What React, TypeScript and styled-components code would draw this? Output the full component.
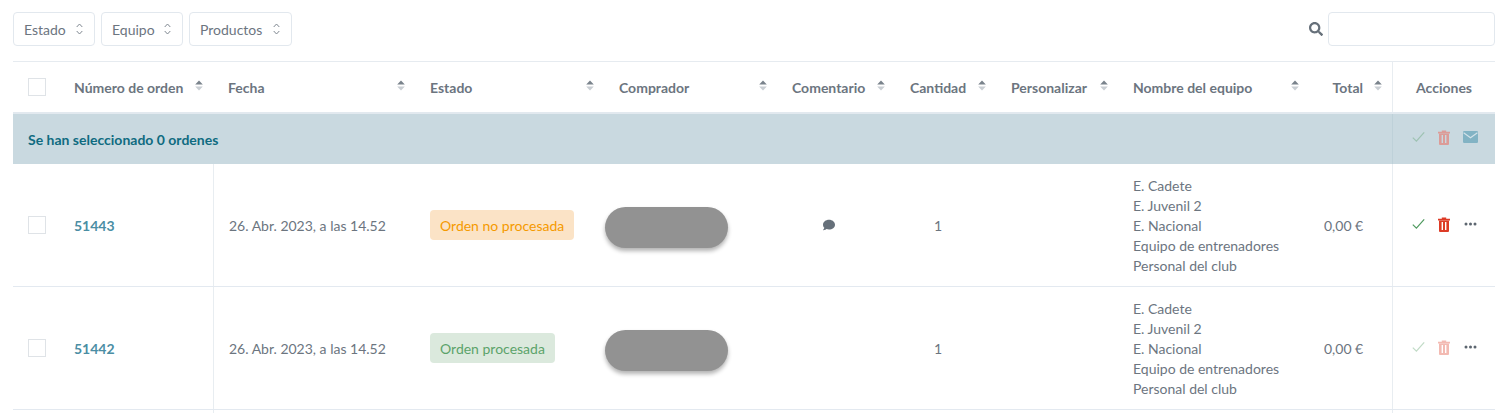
import React from "react";
import styled, { createGlobalStyle } from "styled-components";
import { FaComment, FaSearch } from "react-icons/fa";

const GRID = "46px 154px 202px 189px 173px 118px 101px 122px 191px 83px 103px";

const GlobalStyle = createGlobalStyle`
  html, body {
    margin: 0;
    padding: 0;
    background: #fff;
    overflow: hidden;
    font-family: "Lato", "Liberation Sans", sans-serif;
    color: #6c757f;
  }
`;

const Page = styled.div`
  padding: 12px 14px 0 13px;
  height: 401px;
  overflow: hidden;
`;

const Toolbar = styled.div`
  display: flex;
  justify-content: space-between;
  align-items: center;
  height: 34px;
  margin-bottom: 15px;
`;

const Filters = styled.div`
  display: flex;
  gap: 6px;
`;

const FilterButton = styled.button<{ $width: number }>`
  display: flex;
  align-items: center;
  justify-content: space-between;
  box-sizing: border-box;
  width: ${(p) => p.$width}px;
  height: 34px;
  padding: 0 11px 0 10px;
  background: #fff;
  border: 1px solid #e2e8ee;
  border-radius: 4px;
  font: 400 14px "Lato", sans-serif;
  color: #6c757f;
`;

const SearchBox = styled.div`
  display: flex;
  align-items: center;
  gap: 5px;
  color: #66707a;
`;

const SearchInput = styled.input`
  box-sizing: border-box;
  width: 167px;
  height: 34px;
  background: #fff;
  border: 1px solid #e2e8ee;
  border-radius: 4px;
`;

const HeaderRow = styled.div`
  display: grid;
  grid-template-columns: ${GRID};
  height: 50px;
  border-top: 1px solid #e6ebf0;
  border-bottom: 2px solid #e2e9ef;
`;

const HeaderCell = styled.div<{ $end?: boolean }>`
  display: flex;
  align-items: center;
  justify-content: ${(p) => (p.$end ? "flex-end" : "space-between")};
  gap: 11px;
  padding: 0 10px 0 15px;
  font-size: 14px;
  font-weight: 700;
  color: #6c757f;
  white-space: nowrap;
`;

const ActionsHead = styled(HeaderCell)`
  justify-content: center;
  padding: 0;
  border-left: 1px solid #e8edf1;
`;

const Banner = styled.div`
  display: grid;
  grid-template-columns: 1fr 103px;
  align-items: stretch;
  height: 50px;
  background: #c9d9e0;
`;

const BannerText = styled.div`
  display: flex;
  align-items: center;
  padding-left: 15px;
  font-size: 14px;
  font-weight: 700;
  color: #0f6b80;
`;

const ActionGroup = styled.div`
  display: flex;
  align-items: center;
  box-sizing: border-box;
  height: 100%;
  padding: 0 0 2px 12px;
  border-left: 1px solid #e8edf1;
`;

const BannerActions = styled(ActionGroup)`
  padding-bottom: 4px;
  border-left-color: #bed1d9;
`;

const ActionSlot = styled.span<{ $faded?: boolean }>`
  display: flex;
  justify-content: center;
  align-items: center;
  width: 26px;
  opacity: ${(p) => (p.$faded ? 0.35 : 1)};
`;

const Row = styled.div`
  display: grid;
  grid-template-columns: ${GRID};
  height: 122px;
  border-bottom: 1px solid #e3e9f0;
`;

const TailRow = styled(Row)`
  height: 3px;
  border-bottom: none;
`;

const Cell = styled.div<{ $divided?: boolean; $center?: boolean }>`
  display: flex;
  align-items: center;
  justify-content: ${(p) => (p.$center ? "center" : "flex-start")};
  padding: ${(p) => (p.$center ? "0 30px 0 15px" : "0 0 0 15px")};
  font-size: 14px;
  color: #6c757f;
  white-space: nowrap;
  border-left: ${(p) => (p.$divided ? "1px solid #e8edf1" : "none")};
`;

const Check = styled.span`
  display: block;
  width: 18px;
  height: 18px;
  box-sizing: border-box;
  background: #fff;
  border: 1px solid #dfe3e7;
`;

const OrderLink = styled.a`
  font-weight: 700;
  color: #4b8ea4;
`;

const Badge = styled.span<{ $done?: boolean }>`
  display: inline-flex;
  align-items: center;
  height: 30px;
  padding: 0 10px;
  border-radius: 4px;
  background: ${(p) => (p.$done ? "#dbe9dd" : "#fbe3c6")};
  color: ${(p) => (p.$done ? "#5ba36a" : "#f59a00")};
`;

const BuyerPill = styled.span`
  display: block;
  width: 123px;
  height: 41px;
  margin: 4px 0 0 -14px;
  border-radius: 21px;
  background: #929292;
  box-shadow: 0 3px 4px rgba(0, 0, 0, 0.3);
`;

const TeamList = styled.div`
  margin-top: 2px;
  line-height: 20px;
`;

const CheckIcon = ({ color }: { color: string }) => (
  <svg width="13" height="12" viewBox="0 0 13 12" fill="none">
    <path d="M0.8 6.6 L4.4 10.2 L12.2 1.4" stroke={color} strokeWidth="1.2" />
  </svg>
);

const TrashIcon = ({ color, bars }: { color: string; bars: string }) => (
  <svg width="12" height="15" viewBox="0 0 12 15">
    <path d="M0 1.8 H3.8 V0.4 H8.2 V1.8 H12 V3.4 H0 Z" fill={color} />
    <path d="M1 3.4 H11 V14 Q11 15 10 15 H2 Q1 15 1 14 Z" fill={color} />
    <rect x="3.6" y="5" width="1.4" height="8" fill={bars} />
    <rect x="7" y="5" width="1.4" height="8" fill={bars} />
  </svg>
);

const MailIcon = () => (
  <svg width="15" height="12" viewBox="0 0 15 12">
    <rect width="15" height="12" rx="1.2" fill="#82b3c4" />
    <path d="M0.6 1.8 L7.5 6.8 L14.4 1.8" fill="none" stroke="#d4e3e9" strokeWidth="1.1" />
  </svg>
);

const DotsIcon = () => (
  <svg width="13" height="4" viewBox="0 0 13 4" fill="#5d6670">
    <circle cx="2" cy="2" r="1.5" />
    <circle cx="6.5" cy="2" r="1.5" />
    <circle cx="11" cy="2" r="1.5" />
  </svg>
);

const SortIcon = () => (
  <svg width="8" height="11" viewBox="0 0 8 11" style={{ marginBottom: 4, flexShrink: 0 }}>
    <path d="M4 0.5 L7.8 4.6 H0.2 Z" fill="#7a838c" />
    <path d="M4 10.5 L7.8 6.4 H0.2 Z" fill="#c9ced3" />
  </svg>
);

const UpDownIcon = () => (
  <svg width="7" height="12" viewBox="0 0 7 12" fill="none" stroke="#7f8790" strokeWidth="1">
    <path d="M0.7 4 L3.5 1 L6.3 4" />
    <path d="M0.7 8 L3.5 11 L6.3 8" />
  </svg>
);

const filters = [
  { label: "Estado", width: 82 },
  { label: "Equipo", width: 82 },
  { label: "Productos", width: 103 },
];

const columns = [
  "Número de orden",
  "Fecha",
  "Estado",
  "Comprador",
  "Comentario",
  "Cantidad",
  "Personalizar",
  "Nombre del equipo",
];

const teams = ["E. Cadete", "E. Juvenil 2", "E. Nacional", "Equipo de entrenadores", "Personal del club"];

const orders = [
  { id: "51443", done: false, comment: true },
  { id: "51442", done: true, comment: false },
];

const App = () => {
  return (
    <Page>
      <GlobalStyle />
      <Toolbar>
        <Filters>
          {filters.map((f) => (
            <FilterButton key={f.label} $width={f.width}>
              {f.label}
              <UpDownIcon />
            </FilterButton>
          ))}
        </Filters>
        <SearchBox>
          <FaSearch size={14} />
          <SearchInput />
        </SearchBox>
      </Toolbar>

      <HeaderRow>
        <Cell>
          <Check />
        </Cell>
        {columns.map((c) => (
          <HeaderCell key={c}>
            {c}
            <SortIcon />
          </HeaderCell>
        ))}
        <HeaderCell $end>
          Total
          <SortIcon />
        </HeaderCell>
        <ActionsHead>Acciones</ActionsHead>
      </HeaderRow>

      <Banner>
        <BannerText>Se han seleccionado 0 ordenes</BannerText>
        <BannerActions>
          <ActionSlot $faded>
            <CheckIcon color="#4f9a5f" />
          </ActionSlot>
          <ActionSlot>
            <TrashIcon color="#dc9c98" bars="#c9d9e0" />
          </ActionSlot>
          <ActionSlot>
            <MailIcon />
          </ActionSlot>
        </BannerActions>
      </Banner>

      {orders.map((o) => (
        <Row key={o.id}>
          <Cell>
            <Check />
          </Cell>
          <Cell>
            <OrderLink>{o.id}</OrderLink>
          </Cell>
          <Cell $divided>26. Abr. 2023, a las 14.52</Cell>
          <Cell>
            <Badge $done={o.done}>{o.done ? "Orden procesada" : "Orden no procesada"}</Badge>
          </Cell>
          <Cell>
            <BuyerPill />
          </Cell>
          <Cell $center>{o.comment && <FaComment size={12} color="#66707a" />}</Cell>
          <Cell $center>1</Cell>
          <Cell />
          <Cell>
            <TeamList>
              {teams.map((t) => (
                <div key={t}>{t}</div>
              ))}
            </TeamList>
          </Cell>
          <Cell>0,00 €</Cell>
          <ActionGroup>
            <ActionSlot $faded={o.done}>
              <CheckIcon color="#4f9a5f" />
            </ActionSlot>
            <ActionSlot $faded={o.done}>
              <TrashIcon color="#dd3b26" bars="#fff" />
            </ActionSlot>
            <ActionSlot>
              <DotsIcon />
            </ActionSlot>
          </ActionGroup>
        </Row>
      ))}

      <TailRow>
        <Cell />
        <Cell />
        <Cell $divided />
        <Cell />
        <Cell />
        <Cell />
        <Cell />
        <Cell />
        <Cell />
        <Cell />
        <Cell $divided />
      </TailRow>
    </Page>
  );
};

export default App;
